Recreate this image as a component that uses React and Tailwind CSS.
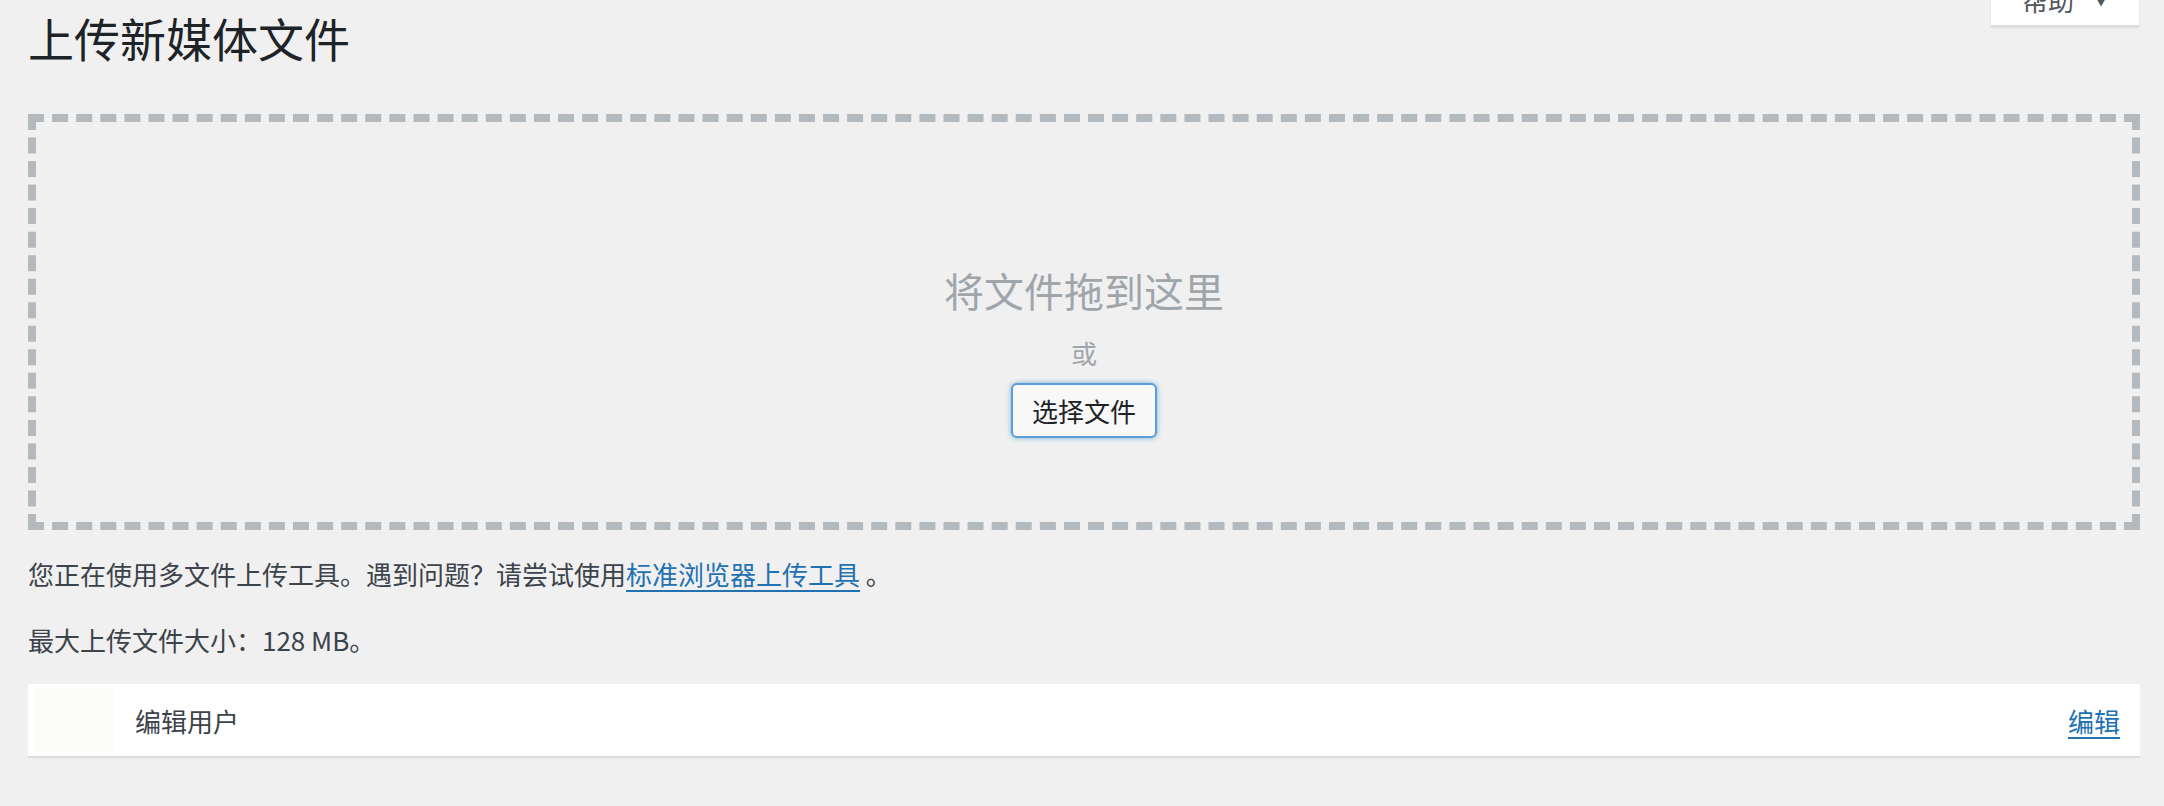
import React from "react";

const font = { fontFamily: '"Noto Sans CJK SC", "Noto Sans", sans-serif' };

function HelpTab() {
  return (
    <div className="absolute right-[25px] top-[-26px] w-[148px] h-[53px] bg-white border-b-2 border-[#dcdcde] shadow-[0_1px_2px_rgba(0,0,0,0.08)] flex items-center justify-center gap-5 text-[26px] text-[#50575e]">
      <span>帮助</span>
      <span className="text-[14px]">▼</span>
    </div>
  );
}

function DropZone() {
  return (
    <div className="h-[416px] border-8 border-dashed border-[#b4b9be] flex flex-col items-center pt-[142px]">
      <p className="text-[40px] leading-[52px] text-[#a0a5aa]">将文件拖到这里</p>
      <p className="mt-[17px] text-[26px] leading-[40px] text-[#a0a5aa]">或</p>
      <button className="mt-[10px] w-[146px] h-[55px] rounded-[6px] border-2 border-[#5b9dd9] bg-[#f8f8f8] shadow-[0_0_5px_rgba(30,140,190,0.6)] text-[26px] text-[#1d2327] flex items-center justify-center">
        选择文件
      </button>
    </div>
  );
}

export default function App() {
  return (
    <div className="relative min-h-[806px] bg-[#f0f0f1] pl-[28px] pr-[24px] pt-[7px] overflow-hidden" style={font}>
      <HelpTab />
      <h1 className="text-[46px] leading-[60px] text-[#1d2327] font-normal">上传新媒体文件</h1>
      <div className="mt-[47px]">
        <DropZone />
      </div>
      <p className="mt-[24px] text-[26px] leading-[40px] text-[#3c434a]">
        您正在使用多文件上传工具。遇到问题？请尝试使用
        <a href="#" className="text-[#2271b1] underline decoration-2 underline-offset-[5px]">标准浏览器上传工具</a>
        {" "}。
      </p>
      <p className="mt-[26px] text-[26px] leading-[40px] text-[#3c434a]">最大上传文件大小：128 MB。</p>
      <div className="mt-[24px] h-[74px] bg-white border-b-2 border-[#dcdcde] flex items-center pl-[6px] pr-[20px]">
        <div className="w-[80px] h-[64px] bg-[#fbfcfa]" />
        <span className="ml-[21px] text-[26px] text-[#3c434a]">编辑用户</span>
        <a href="#" className="ml-auto text-[26px] text-[#2271b1] underline decoration-2 underline-offset-[5px]">编辑</a>
      </div>
    </div>
  );
}
